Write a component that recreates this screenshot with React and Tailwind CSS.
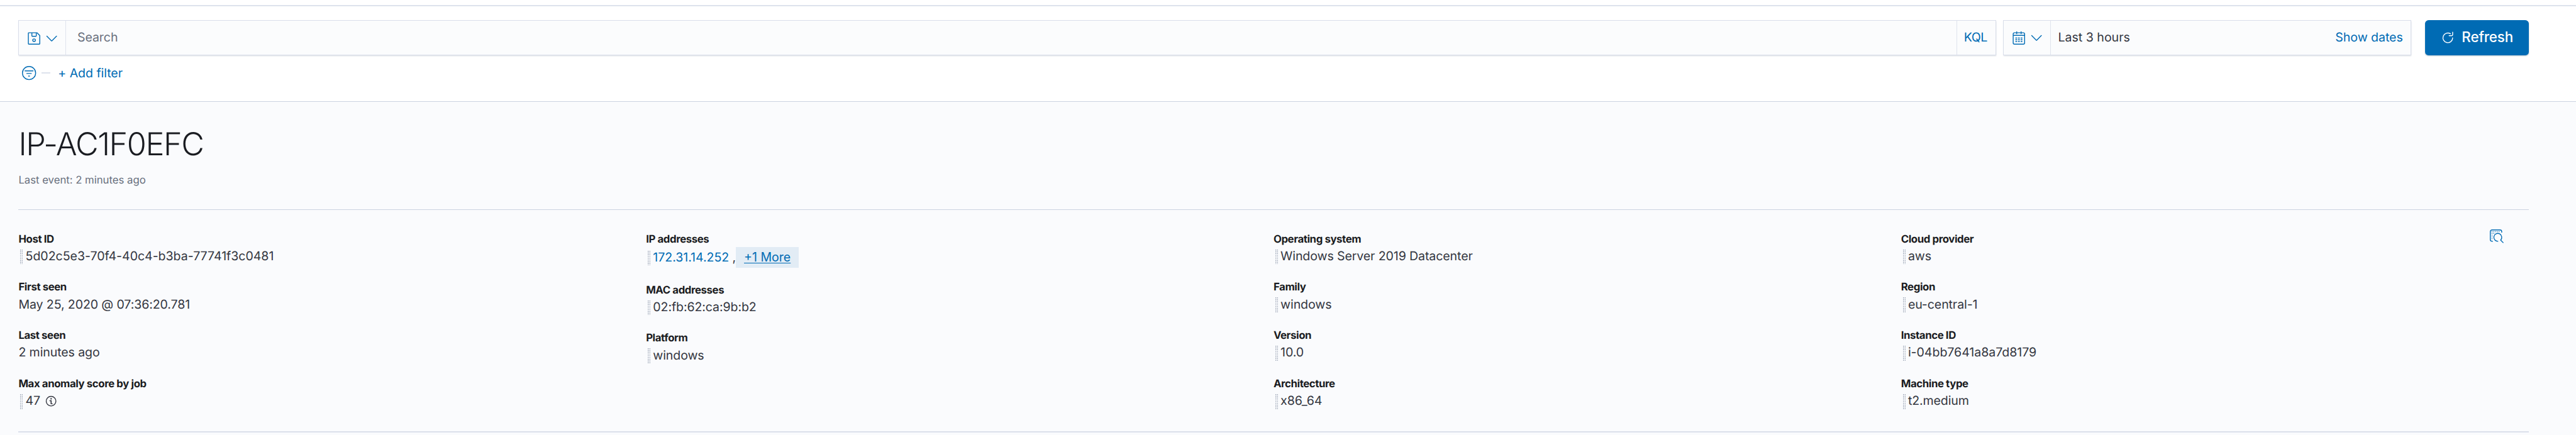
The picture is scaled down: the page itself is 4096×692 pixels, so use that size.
import React from "react";

const COLUMNS = [
  [
    { label: "Host ID", value: "5d02c5e3-70f4-40c4-b3ba-77741f3c0481", drag: true, loose: true },
    { label: "First seen", value: "May 25, 2020 @ 07:36:20.781" },
    { label: "Last seen", value: "2 minutes ago" },
    { label: "Max anomaly score by job", value: "47", drag: true, info: true },
  ],
  [
    { label: "IP addresses", value: "172.31.14.252", drag: true, more: "+1 More" },
    { label: "MAC addresses", value: "02:fb:62:ca:9b:b2", drag: true },
    { label: "Platform", value: "windows", drag: true },
  ],
  [
    { label: "Operating system", value: "Windows Server 2019 Datacenter", drag: true },
    { label: "Family", value: "windows", drag: true },
    { label: "Version", value: "10.0", drag: true },
    { label: "Architecture", value: "x86_64", drag: true },
  ],
  [
    { label: "Cloud provider", value: "aws", drag: true },
    { label: "Region", value: "eu-central-1", drag: true },
    { label: "Instance ID", value: "i-04bb7641a8a7d8179", drag: true, loose: true },
    { label: "Machine type", value: "t2.medium", drag: true },
  ],
];

const Icon = ({ className = "", children }) => (
  <svg viewBox="0 0 16 16" className={`h-[22.37px] w-[22.37px] shrink-0 overflow-visible ${className}`} fill="none" stroke="currentColor" strokeLinejoin="round">
    {children}
  </svg>
);

const SaveIcon = ({ className }) => (
  <Icon className={className}>
    <path d="M2 1.5h9.3L14.5 4.7V14a.5.5 0 0 1-.5.5H2a.5.5 0 0 1-.5-.5V2a.5.5 0 0 1 .5-.5z" />
    <path d="M5.5 1.5V5a.5.5 0 0 0 .5.5h4a.5.5 0 0 0 .5-.5V1.5" />
    <circle cx="8" cy="10" r="1.5" />
  </Icon>
);

const ChevronIcon = ({ className }) => (
  <Icon className={className}>
    <path d="M2.5 5.4l5.1 5.1a.57.57 0 0 0 .8 0l5.1-5.1" strokeLinecap="round" />
  </Icon>
);

const CalendarIcon = ({ className }) => (
  <Icon className={className}>
    <rect x="1.5" y="1.5" width="13" height="13" rx="1.5" />
    <path d="M1.5 4.5h13M5.5 0v3M10.5 0v3" />
    <path d="M4 7.5h2M7 7.5h2M10 7.5h2M4 9.5h2M7 9.5h2M10 9.5h2M4 11.5h2M7 11.5h2M10 11.5h2" />
  </Icon>
);

const FilterIcon = ({ className }) => (
  <Icon className={className}>
    <circle cx="8" cy="8" r="7.5" />
    <path d="M3.4 5.5h9.2M5.4 8.5h5.2M7.4 11.5h1.2" strokeLinecap="round" />
  </Icon>
);

const RefreshIcon = ({ className }) => (
  <Icon className={className}>
    <path
      fill="currentColor"
      stroke="none"
      d="M11.228 2.942a.5.5 0 1 1-.538.842A5 5 0 1 0 13 8a.5.5 0 1 1 1 0 6 6 0 1 1-2.772-5.058zM14 1.5v3A1.5 1.5 0 0 1 12.5 6h-3a.5.5 0 0 1 0-1h3a.5.5 0 0 0 .5-.5v-3a.5.5 0 1 1 1 0z"
    />
  </Icon>
);

const InfoIcon = ({ className }) => (
  <Icon className={className}>
    <path
      fill="currentColor"
      stroke="none"
      d="M7.5 11.508L7.468 8H6.25V7h2.401l.03 3.508H9.8v1H7.5zm-.25-6.202a.83.83 0 0 1 .207-.577c.137-.153.334-.229.59-.229.256 0 .454.076.593.23.14.152.209.345.209.576 0 .228-.07.417-.209.568-.14.15-.337.226-.593.226-.256 0-.453-.075-.59-.226a.81.81 0 0 1-.207-.568z"
    />
    <circle cx="8" cy="8" r="5.5" />
  </Icon>
);

const InspectIcon = ({ className }) => (
  <Icon className={className}>
    <path d="M13.5 3.5V2.5a2 2 0 0 0-2-2h-9a2 2 0 0 0-2 2v9a2 2 0 0 0 2 2h1" />
    <path d="M9.5 13.47a4.5 4.5 0 1 1 2.8-1.37l3.1 3.2" />
    <path d="M2 2.5h9M2 4.5h3" strokeDasharray="1 1" strokeOpacity=".75" />
    <path d="M2.5 6v5" strokeDasharray="1 1" strokeOpacity=".75" />
  </Icon>
);

const Grip = () => (
  <svg viewBox="0 0 6 34" className="mt-[2px] mr-[4.2px] ml-[2.8px] h-[23.77px] w-[4.19px] shrink-0" stroke="#98a2b3" strokeWidth="2">
    <path d="M1 0v34M5 0v34" strokeDasharray="2 2" />
  </svg>
);

function Field({ label, value, drag, info, more, loose }) {
  return (
    <div className="mb-[22.37px]">
      <div className="h-[25.16px] text-[16.78px] leading-[26.6px] font-bold tracking-[-0.024em] text-[#1a1c21]">{label}</div>
      <div className={`flex items-center text-[19.57px] leading-[29.36px] text-[#343741] ${more ? "h-[33.55px]" : "h-[29.36px]"} ${loose ? "tracking-[-0.002em]" : "tracking-[-0.0055em]"}`}>
        {drag && <Grip />}
        {more ? (
          <>
            <span className="whitespace-pre">
              <span className="tracking-[-0.002em] text-[#006bb4]">{value}</span> ,
            </span>
            <button className="flex h-[33.55px] items-center bg-[#e2ecf5] px-[12.9px] tracking-normal text-[#006bb4] underline decoration-[1.4px] underline-offset-[2.4px]">{more}</button>
          </>
        ) : (
          <span>{value}</span>
        )}
        {info && <InfoIcon className="ml-[5.6px]" />}
      </div>
    </div>
  );
}

const BOX = "flex h-[56px] items-stretch border border-[#d9deea] bg-[#fbfcfd] shadow-[0_1.5px_2px_-0.5px_rgba(152,162,179,0.4)]";

export default function App() {
  return (
    <div className="flex h-[692px] w-[4096px] flex-col overflow-hidden bg-[#fafbfd] font-[Inter,sans-serif] text-[19.57px] leading-[29.36px] font-normal tracking-[-0.003em] text-[#343741] [text-rendering:geometricPrecision]">
      <header className="h-[162px] border-b border-[#cbd3e1] bg-white">
        <div className="h-[10px] border-b-2 border-[#dde2ec]" />
        <div className="flex pt-[22px] pl-[29.4px]">
          <div className={`${BOX} w-[3144.3px]`}>
            <div className="flex w-[75px] items-center border-r border-[#dfe3ed] pt-[3px] pl-[13px] text-[#006bb4]">
              <SaveIcon />
              <ChevronIcon className="ml-[5.6px]" />
            </div>
            <div className="flex flex-1 items-center pl-[17.5px] text-[#69707d]">Search</div>
            <div className="flex w-[62px] items-center border-l border-[#dfe3ed] pl-[11px] tracking-[-0.02em] text-[#006bb4]">KQL</div>
          </div>
          <div className={`${BOX} ml-[11px] w-[649px]`}>
            <div className="flex w-[75.6px] items-center border-r border-[#dfe3ed] pl-[12.9px] text-[#006bb4]">
              <CalendarIcon className="mt-[3px]" />
              <ChevronIcon className="ml-[5.6px]" />
            </div>
            <div className="flex flex-1 items-center pl-[11.2px] tracking-normal">Last 3 hours</div>
            <div className="flex items-center pr-[12px] text-[#006bb4]">Show dates</div>
          </div>
          <button className="ml-[22px] flex h-[56px] w-[165.2px] items-center rounded-[5.6px] bg-[#006bb4] pl-[25.2px] text-[22.37px] tracking-[-0.006em] text-white shadow-[0_1.5px_2px_-0.5px_rgba(54,97,126,0.4)]">
            <RefreshIcon />
            <span className="mb-[2px] ml-[11.1px] font-medium">Refresh</span>
          </button>
        </div>
        <div className="mt-[14px] flex h-[28px] items-center pl-[35px] text-[#006bb4]">
          <FilterIcon />
          <span className="ml-[8.4px] h-[2px] w-[14px] bg-[#dde2ec]" />
          <span className="mt-[1px] ml-[12.6px]">+ Add filter</span>
        </div>
      </header>

      <main className="pt-[36.2px] pr-[75.5px] pl-[29.4px]">
        <h1 className="h-[62.9px] text-[50.33px] leading-[64.3px] font-light tracking-[-0.0274em] text-[#1a1c21]">IP-AC1F0EFC</h1>
        <p className="mt-[12.9px] h-[25.2px] text-[16.78px] leading-[26.4px] tracking-[-0.002em] text-[#69707d]">Last event: 2 minutes ago</p>
        <hr className="mt-[33.8px] border-t border-[#cbd3e1]" />
        <section className="grid h-[352px] grid-cols-4 pt-[33.6px]">
          {COLUMNS.map((fields, i) => (
            <div key={i} className="flex justify-between">
              <div>
                {fields.map((f) => (
                  <Field key={f.label} {...f} />
                ))}
              </div>
              {i === COLUMNS.length - 1 && <InspectIcon className="-mt-[2.4px] mr-[39.1px] text-[#006bb4]" />}
            </div>
          ))}
        </section>
        <hr className="border-t-2 border-[#dbe0eb]" />
      </main>
    </div>
  );
}
